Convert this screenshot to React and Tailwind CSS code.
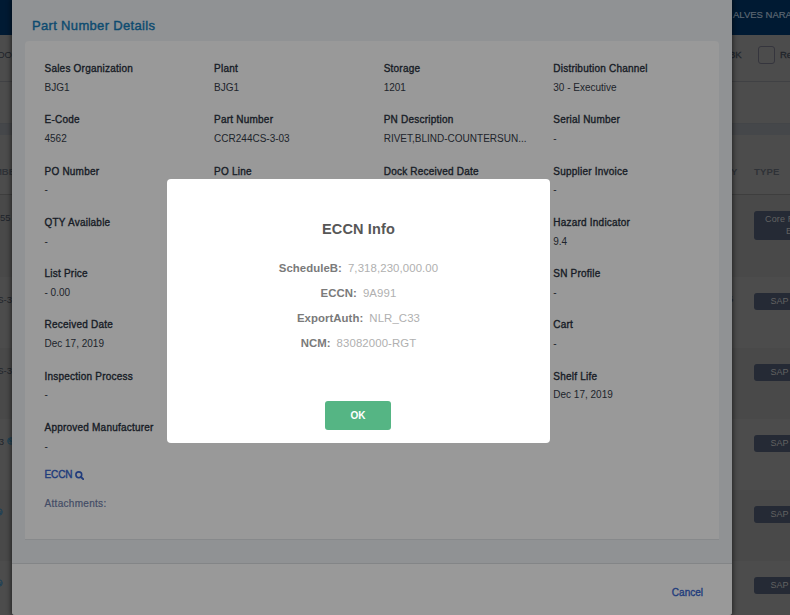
import React from 'react';

const columns = [
  [
    ['Sales Organization', 'BJG1'],
    ['E-Code', '4562'],
    ['PO Number', '-'],
    ['QTY Available', '-'],
    ['List Price', '- 0.00'],
    ['Received Date', 'Dec 17, 2019'],
    ['Inspection Process', '-'],
    ['Approved Manufacturer', '-'],
  ],
  [
    ['Plant', 'BJG1'],
    ['Part Number', 'CCR244CS-3-03'],
    ['PO Line', ''],
  ],
  [
    ['Storage', '1201'],
    ['PN Description', 'RIVET,BLIND-COUNTERSUN...'],
    ['Dock Received Date', ''],
  ],
  [
    ['Distribution Channel', '30 - Executive'],
    ['Serial Number', '-'],
    ['Supplier Invoice', '-'],
    ['Hazard Indicator', '9.4'],
    ['SN Profile', '-'],
    ['Cart', '-'],
    ['Shelf Life', 'Dec 17, 2019'],
  ],
];

const info = [
  ['ScheduleB:', '7,318,230,000.00'],
  ['ECCN:', '9A991'],
  ['ExportAuth:', 'NLR_C33'],
  ['NCM:', '83082000-RGT'],
];

/* One band of the page behind the modal: the slivers left and right of it. */
function Band({ className, left, right }) {
  return (
    <div className={`flex shrink-0 justify-between overflow-hidden ${className}`}>
      <div className="flex w-3 shrink-0 justify-end overflow-hidden whitespace-nowrap">{left}</div>
      <div className="flex w-[58px] shrink-0 overflow-hidden whitespace-nowrap">{right}</div>
    </div>
  );
}

function Tag() {
  return (
    <div className="ml-[22px] mt-4 h-[17px] w-[52px] shrink-0 rounded-[3px] bg-[#252a35] pl-[16.5px] text-[9px] leading-[17px] text-[#626262]">
      SAP
    </div>
  );
}

function Globe() {
  return (
    <svg className="mt-[18px] h-[8px] w-[8px] shrink-0" viewBox="0 0 8 8" fill="none" stroke="#1b4157" strokeWidth="1">
      <circle cx="4" cy="4" r="3.3" />
      <path d="M1 4h6M4 1v6M2 2l4 4" />
    </svg>
  );
}

function Backdrop() {
  return (
    <div className="flex h-full flex-col bg-[#4c4c4c] text-[#20242b]">
      <Band
        className="h-[35px] bg-[#001a33]"
        right={
          <span className="pl-px pt-[9px] text-[9.5px] leading-3 text-[#5c6772] [-webkit-text-stroke:0.2px_#5c6772]">
            ALVES NARA
          </span>
        }
      />
      <Band
        className="h-[47px] border-b border-[#404144]"
        left={<span className="pt-[14px] text-[9.5px] leading-3">DO</span>}
        right={
          <>
            <span className="-ml-[3px] w-[29px] shrink-0 pt-[14px] text-[9.5px] leading-3 [-webkit-text-stroke:0.3px_#20242b]">
              BK
            </span>
            <span className="mt-[11px] h-[18px] w-[17px] shrink-0 rounded-[3px] border border-[#35353d]" />
            <span className="pl-[5px] pt-[14px] text-[9.5px] leading-3 [-webkit-text-stroke:0.3px_#20242b]">Re</span>
          </>
        }
      />
      <Band className="h-[41px]" />
      <Band className="h-[12px] border-t border-[#434548] bg-[#45474a]" />
      <Band
        className="h-[60px] border-b border-[#3e3e3e] text-[9.5px] font-bold leading-3 text-[#2f3237]"
        left={<span className="-mr-[3px] pt-[31px]">MBE</span>}
        right={
          <>
            <span className="-ml-px w-[23px] shrink-0 pt-[31px]">Y</span>
            <span className="pt-[31px] tracking-[0.2px]">TYPE</span>
          </>
        }
      />
      <Band
        className="h-[82px] bg-[#494949]"
        left={<span className="pr-[1.5px] pt-[17px] text-[9.5px] leading-3">55</span>}
        right={
          <div className="ml-[22px] mt-4 h-[29px] w-[60px] shrink-0 rounded-[3px] bg-[#252a35] pt-[2px] text-[9px] leading-3 text-[#626262]">
            <div className="pl-[11px] tracking-[0.15px]">Core R</div>
            <div className="pl-[32px]">E</div>
          </div>
        }
      />
      <Band
        className="h-[71px] bg-[#4c4c4c]"
        left={<span className="pt-[17px] text-[9.5px] leading-3">S-3</span>}
        right={
          <>
            <span className="-ml-[4px] w-[4px] shrink-0 pt-[16px] text-[9.5px] leading-3">6</span>
            <Tag />
          </>
        }
      />
      <Band
        className="h-[71px] bg-[#494949]"
        left={<span className="pt-[17px] text-[9.5px] leading-3">S-3</span>}
        right={<Tag />}
      />
      <Band
        className="h-[71px] bg-[#4c4c4c]"
        left={
          <div className="-mr-[3px] flex">
            <span className="pr-[3px] pt-[17px] text-[9.5px] leading-3">3</span>
            <Globe />
          </div>
        }
        right={<Tag />}
      />
      <Band className="h-[71px] bg-[#494949]" left={<div className="pr-[9px]"><Globe /></div>} right={<Tag />} />
      <Band className="h-[54px] bg-[#4c4c4c]" left={<div className="pr-[9px]"><Globe /></div>} right={<Tag />} />
    </div>
  );
}

function DetailsModal() {
  return (
    <div className="absolute left-3 top-0 flex h-[615px] w-[720px] flex-col overflow-hidden rounded-b-[3px] bg-[#909294] shadow-[0_0_5px_1px_rgba(0,0,0,0.55)]">
      <h2 className="h-[41px] pl-5 pt-[17px] text-[13px] leading-[17px] tracking-[0.33px] text-[#0d4b70] [-webkit-text-stroke:0.4px_#0d4b70]">
        Part Number Details
      </h2>
      <section className="mx-[13px] h-[499px] rounded-t-[4px] border-b border-[#87898b] bg-[#999] pl-[19.5px] pt-[21px]">
        <div className="grid h-[405px] grid-cols-[169.6px_169.6px_169.6px_1fr]">
          {columns.map((fields, i) => (
            <div key={i} className="flex flex-col">
              {fields.map(([label, value]) => (
                <div key={label} className="h-[51.3px] shrink-0 whitespace-nowrap text-[10px] leading-[14px]">
                  <div className="tracking-[0.22px] text-[#171c26] [-webkit-text-stroke:0.35px_#171c26]">{label}</div>
                  <div className="pt-[4.7px] text-[#20242b]">{value}</div>
                </div>
              ))}
            </div>
          ))}
        </div>
        <div className="flex items-center gap-[3px] pt-[1px] text-[10px] leading-[14px] text-[#213c7c]">
          <span className="tracking-[-0.1px] [-webkit-text-stroke:0.4px_#213c7c]">ECCN</span>
          <svg className="h-[9px] w-[9px]" viewBox="0 0 9 9" fill="none" stroke="currentColor">
            <circle cx="3.8" cy="3.8" r="2.9" strokeWidth="1.6" />
            <path d="M6 6l2.2 2.2" strokeWidth="1.9" strokeLinecap="round" />
          </svg>
        </div>
        <div className="pt-[15px] text-[10px] leading-[14px] tracking-[0.3px] text-[#434c66] [-webkit-text-stroke:0.2px_#434c66]">
          Attachments:
        </div>
      </section>
      <footer className="mt-[23px] flex flex-1 justify-end border-t border-[#838587] bg-[#999] pr-[29px] pt-[22px] text-[10px] leading-[14px] text-[#213c7c]">
        <span className="[-webkit-text-stroke:0.35px_#213c7c]">Cancel</span>
      </footer>
    </div>
  );
}

function InfoDialog() {
  return (
    <div className="absolute left-[167px] top-[179px] flex h-[264px] w-[383px] flex-col items-center rounded-[4px] bg-white">
      <h3 className="pt-[41px] text-[14.5px] font-bold leading-[18px] tracking-[0.15px] text-[#575757]">ECCN Info</h3>
      <div className="flex flex-col items-center pt-[18px]">
        {info.map(([label, value]) => (
          <div key={label} className="flex h-[25px] items-center gap-[6px] text-[11.4px]">
            <span className="font-bold tracking-[0.05px] text-[#7a7a7a]">{label}</span>
            <span className="tracking-[0.1px] text-[#b0b0b0]">{value}</span>
          </div>
        ))}
      </div>
      <button className="mr-px mt-[45px] h-[29px] w-[66px] rounded-[3px] bg-[#55b584] text-[10px] font-bold text-white">
        OK
      </button>
    </div>
  );
}

export default function App() {
  return (
    <div className="relative h-[615px] w-[790px] overflow-hidden font-['Liberation_Sans',Arial,sans-serif]">
      <Backdrop />
      <DetailsModal />
      <InfoDialog />
    </div>
  );
}
